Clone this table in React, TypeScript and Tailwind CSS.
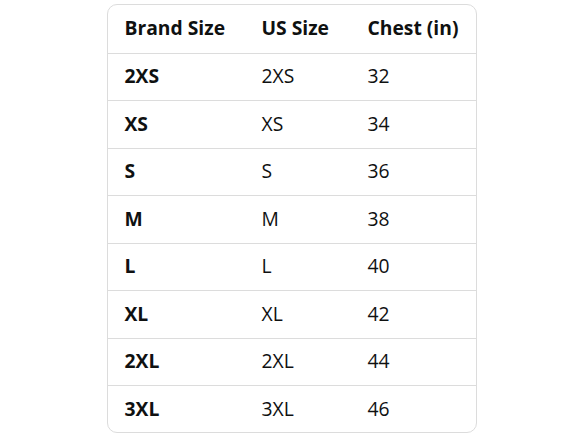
import React from 'react'

const rows = [
  ['2XS', '2XS', '32'],
  ['XS', 'XS', '34'],
  ['S', 'S', '36'],
  ['M', 'M', '38'],
  ['L', 'L', '40'],
  ['XL', 'XL', '42'],
  ['2XL', '2XL', '44'],
  ['3XL', '3XL', '46'],
]

export default function App() {
  return (
    <div className="min-h-screen bg-white pt-[4px] flex justify-center font-['Open_Sans',sans-serif] text-[#0f1111]">
      <div className="w-[370px] h-[429px] ml-[-5px] border border-[#dcdcdc] rounded-[10px] overflow-hidden">
        <table className="w-full border-collapse text-[19.3px]">
          <thead>
            <tr className="h-[48px] border-b border-[#dcdcdc]">
              <th className="w-[137px] pl-[17px] text-left font-bold">Brand Size</th>
              <th className="w-[106px] pl-[17px] text-left font-bold">US Size</th>
              <th className="pl-[17px] text-left font-bold">Chest (in)</th>
            </tr>
          </thead>
          <tbody>
            {rows.map((r, i) => (
              <tr key={i} className={i < rows.length - 1 ? 'h-[47.5px] border-b border-[#dcdcdc]' : 'h-[47.5px]'}>
                <td className="pl-[17px] font-bold">{r[0]}</td>
                <td className="pl-[17px]">{r[1]}</td>
                <td className="pl-[17px]">{r[2]}</td>
              </tr>
            ))}
          </tbody>
        </table>
      </div>
    </div>
  )
}
